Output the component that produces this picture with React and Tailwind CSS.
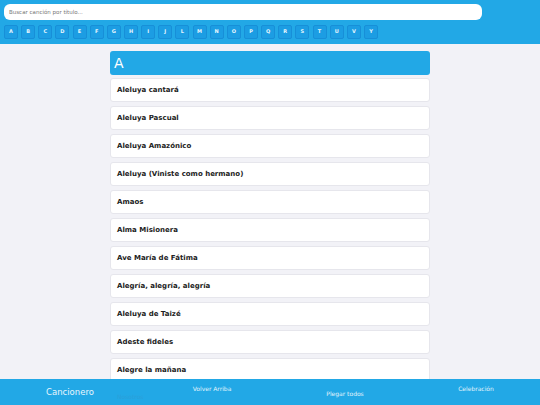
import React from 'react';

const letters = ['A','B','C','D','E','F','G','H','I','J','L','M','N','O','P','Q','R','S','T','U','V','Y'];

const songs = [
  'Aleluya cantará',
  'Aleluya Pascual',
  'Aleluya Amazónico',
  'Aleluya (Viniste como hermano)',
  'Amaos',
  'Alma Misionera',
  'Ave María de Fátima',
  'Alegría, alegría, alegría',
  'Aleluya de Taizé',
  'Adeste fideles',
  'Alegre la mañana',
  'Alabaré',
];

export default function App() {
  return (
    <div className="relative h-[405px] w-[540px] overflow-hidden bg-[#f2f2f7]" style={{ fontFamily: '"DejaVu Sans", Verdana, sans-serif' }}>
      {/* header */}
      <div className="flex h-[44px] flex-col gap-[5px] bg-[#22a8e6] px-[4px] pt-[4px]">
        <div className="flex h-[16px] w-[478px] items-center rounded-[6px] bg-white px-[5px]">
          <span className="text-[5.5px] text-[#777]">Buscar canción por título...</span>
        </div>
        <div className="flex gap-[3.15px]">
          {letters.map((l) => (
            <button
              key={l}
              className="flex h-[14px] w-[14px] items-center justify-center rounded-[2px] border border-[#178fd8] bg-[#1c9de3] text-[5px] font-bold text-[#e6f5fd]"
            >
              {l}
            </button>
          ))}
        </div>
      </div>

      {/* list */}
      <div className="mx-auto flex w-[320px] flex-col gap-[4px] pt-[7px]">
        <div className="-mb-[1px] flex h-[24px] items-center rounded-[3px] bg-[#22a8e6] px-[4px] text-[14px] leading-none text-white">
          A
        </div>
        {songs.map((s) => (
          <div
            key={s}
            className="flex h-[24px] shrink-0 items-center rounded-[3px] border border-[#e6e6ec] bg-white px-[6px] text-[7px] font-bold text-[#222]"
          >
            {s}
          </div>
        ))}
      </div>

      {/* footer */}
      <div className="absolute bottom-0 left-0 flex h-[26px] w-full bg-[#22a8e6] text-white">
        <div className="relative flex w-[140px] items-center justify-center pt-[1px] text-[8.5px] text-[#e8f6fd]">
          Cancionero
          <span className="absolute left-[117px] top-[13px] whitespace-nowrap text-[6px] text-[#2a9fd9]">Nosotros</span>
        </div>
        <div className="flex w-[144px] justify-center pt-[5px] text-[6px] text-[#e0f3fc]">Volver Arriba</div>
        <div className="flex w-[122px] items-center justify-center pt-[2px] text-[6px] text-[#e0f3fc]">Plegar todos</div>
        <div className="flex w-[134px] justify-center pl-[6px] pt-[5px] text-[6px] text-[#e0f3fc]">Celebración</div>
      </div>
    </div>
  );
}
